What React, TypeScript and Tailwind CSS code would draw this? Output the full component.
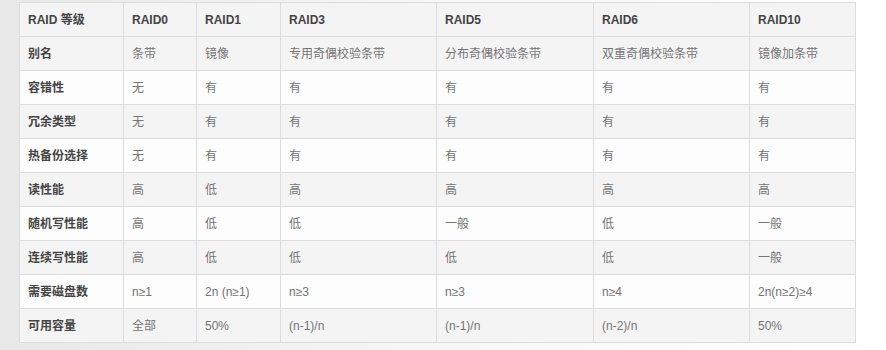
const COLS = [104, 73, 84, 156, 157, 156, 106];

const HEAD = ['RAID 等级', 'RAID0', 'RAID1', 'RAID3', 'RAID5', 'RAID6', 'RAID10'];

const ROWS = [
  ['别名', '条带', '镜像', '专用奇偶校验条带', '分布奇偶校验条带', '双重奇偶校验条带', '镜像加条带'],
  ['容错性', '无', '有', '有', '有', '有', '有'],
  ['冗余类型', '无', '有', '有', '有', '有', '有'],
  ['热备份选择', '无', '有', '有', '有', '有', '有'],
  ['读性能', '高', '低', '高', '高', '高', '高'],
  ['随机写性能', '高', '低', '低', '一般', '低', '一般'],
  ['连续写性能', '高', '低', '低', '低', '低', '一般'],
  ['需要磁盘数', 'n≥1', '2n (n≥1)', 'n≥3', 'n≥3', 'n≥4', '2n(n≥2)≥4'],
  ['可用容量', '全部', '50%', '(n-1)/n', '(n-1)/n', '(n-2)/n', '50%'],
];

export default function App() {
  return (
    <div
      className="w-[886px] h-[350px] overflow-hidden bg-gradient-to-r from-[#e8e8e8] via-[#f7f7f7] to-white pt-[2px] pl-[19px]"
      style={{ fontFamily: '"Liberation Sans", Arial, "Noto Sans CJK SC", sans-serif' }}
    >
      <table className="border-collapse table-fixed text-[12px] w-[836px] border border-[#dcdcdc]">
        <colgroup>
          {COLS.map((w, i) => (
            <col key={i} style={{ width: w }} />
          ))}
        </colgroup>
        <thead>
          <tr className="h-[34px] bg-[#f4f4f4]">
            {HEAD.map((h, i) => (
              <th key={i} className="border border-[#dcdcdc] px-2 text-left font-bold text-[#444444]">
                {h}
              </th>
            ))}
          </tr>
        </thead>
        <tbody>
          {ROWS.map((row, r) => (
            <tr key={r} className={`h-[34px] ${r % 2 === 0 ? 'bg-[#f4f4f4]' : 'bg-[#fdfdfd]'}`}>
              {row.map((cell, c) => (
                <td
                  key={c}
                  className={`border border-[#dcdcdc] px-2 ${c === 0 ? 'font-bold text-[#444444]' : 'text-[#747474]'}`}
                >
                  {cell}
                </td>
              ))}
            </tr>
          ))}
        </tbody>
      </table>
    </div>
  );
}
